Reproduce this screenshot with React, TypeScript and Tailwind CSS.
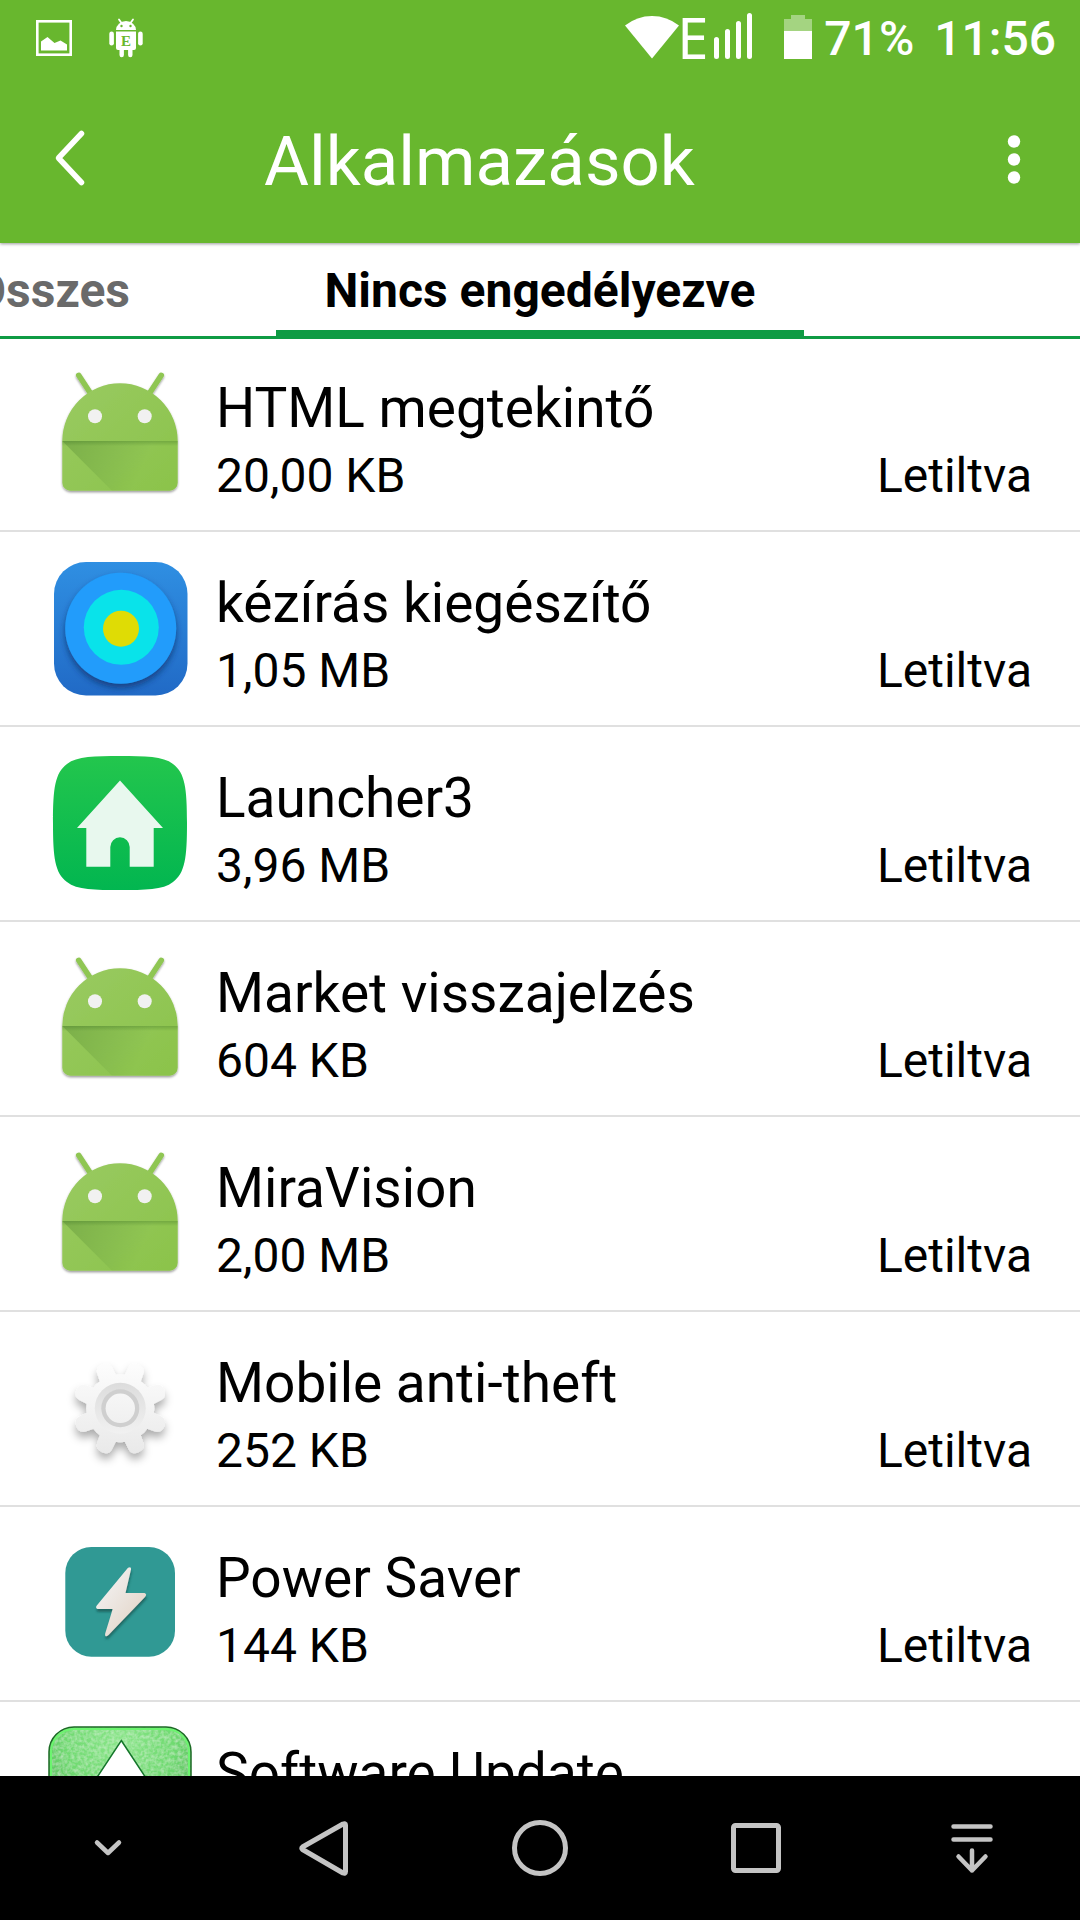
import React from "react";

const AndroidIcon = () => (
  <svg viewBox="0 0 144 144" className="size-36 shrink-0" aria-hidden="true">
    <defs>
      <linearGradient id="droidBody" x1="0" y1="0" x2="1" y2="1">
        <stop offset="0" stopColor="#99ca61" />
        <stop offset="1" stopColor="#8bc34a" />
      </linearGradient>
      <linearGradient id="droidFold" gradientUnits="userSpaceOnUse" x1="20" y1="80" x2="92" y2="112">
        <stop offset="0" stopColor="#33691e" stopOpacity="0.25" />
        <stop offset="1" stopColor="#33691e" stopOpacity="0" />
      </linearGradient>
      <linearGradient id="droidSeam" x1="0" y1="0" x2="0" y2="1">
        <stop offset="0" stopColor="#33691e" stopOpacity="0.3" />
        <stop offset="1" stopColor="#33691e" stopOpacity="0" />
      </linearGradient>
      <filter id="droidShadow" x="-10%" y="-10%" width="120%" height="120%">
        <feDropShadow dx="0" dy="1.5" stdDeviation="1.3" floodColor="#000" floodOpacity="0.4" />
      </filter>
    </defs>
    <g filter="url(#droidShadow)">
      <path d="M30.7 14.3 43 33M113.3 14.3 101 33" stroke="#8fc653" strokeWidth="5.5" strokeLinecap="round" />
      <path d="M14.3 80a57.7 57.7 0 0 1 115.4 0v41.700a8 8 0 0 1-8 8H22.300a8 8 0 0 1-8-8Z" fill="url(#droidBody)" />
    </g>
    <path d="M14.300 80 64 129.700h57.700a8 8 0 0 0 8-8V80Z" fill="url(#droidFold)" />
    <rect x="14.300" y="80" width="115.400" height="5" fill="url(#droidSeam)" />
    <circle cx="47" cy="55.300" r="7" fill="#f1f1f1" />
    <circle cx="96.700" cy="55.300" r="7" fill="#f1f1f1" />
  </svg>
);

const HandwritingIcon = () => (
  <svg viewBox="0 0 144 144" className="size-36 shrink-0" aria-hidden="true">
    <defs>
      <linearGradient id="blueTile" x1="0" y1="0" x2="0" y2="1">
        <stop offset="0" stopColor="#2f8fe2" />
        <stop offset="1" stopColor="#216ac6" />
      </linearGradient>
      <filter id="discShadow" x="-15%" y="-15%" width="130%" height="135%">
        <feDropShadow dx="0" dy="4" stdDeviation="3" floodColor="#0a2f66" floodOpacity="0.7" />
      </filter>
    </defs>
    <rect x="6" y="6" width="133.500" height="133.500" rx="32" fill="url(#blueTile)" />
    <circle cx="72.700" cy="72.300" r="55.500" fill="#209cfb" filter="url(#discShadow)" />
    <circle cx="73.300" cy="71.300" r="37.500" fill="#09e3ea" />
    <circle cx="73" cy="72.700" r="18" fill="#dfdc05" />
  </svg>
);

const LauncherIcon = () => (
  <svg viewBox="0 0 144 144" className="size-36 shrink-0" aria-hidden="true">
    <defs>
      <linearGradient id="greenTile" x1="0" y1="0" x2="0" y2="1">
        <stop offset="0" stopColor="#23c64d" />
        <stop offset="1" stopColor="#02b650" />
      </linearGradient>
    </defs>
    <path
      d="M72 5c25 0 43 0 53 8 12 9 14 24 14 59s-2 50-14 59c-10 8-28 8-53 8s-43 0-53-8C7 122 5 107 5 72s2-50 14-59C29 5 47 5 72 5Z"
      fill="url(#greenTile)"
    />
    <path
      d="M72 29.500 115 77h-9.300v38.700h-24V96a9.700 9.700 0 0 0-19.400 0v19.700h-24V77H29Z"
      fill="#e8f8ee"
    />
  </svg>
);

const teeth = [22.5, 67.5, 112.5, 157.5, 202.5, 247.5, 292.5, 337.5];

const GearIcon = () => (
  <svg viewBox="0 0 144 144" className="size-36 shrink-0" aria-hidden="true">
    <defs>
      <linearGradient id="gearFill" gradientUnits="userSpaceOnUse" x1="72" y1="26" x2="72" y2="118">
        <stop offset="0" stopColor="#fdfdfd" />
        <stop offset="1" stopColor="#e9e9e9" />
      </linearGradient>
      <linearGradient id="gearRing" x1="0" y1="0" x2="0" y2="1">
        <stop offset="0" stopColor="#dcdcdc" />
        <stop offset="1" stopColor="#f1f1f1" />
      </linearGradient>
      <filter id="gearShadow" x="-20%" y="-20%" width="140%" height="150%">
        <feDropShadow dx="0" dy="6" stdDeviation="4" floodColor="#000" floodOpacity="0.32" />
      </filter>
    </defs>
    <g filter="url(#gearShadow)">
      <g fill="url(#gearFill)">
        <circle cx="72.300" cy="72.300" r="34" />
        {teeth.map((angle) => {
          const a = (angle * Math.PI) / 180;
          const point = (r: number, side: number) =>
            `${72.3 + r * Math.cos(a) - side * Math.sin(a)} ${72.3 + r * Math.sin(a) + side * Math.cos(a)}`;
          return (
            <path
              key={angle}
              d={`M${point(28, -9)}L${point(41, -8)}Q${point(47.5, -7.5)} ${point(47.5, 0)}Q${point(47.5, 7.5)} ${point(41, 8)}L${point(28, 9)}Z`}
            />
          );
        })}
      </g>
    </g>
    <circle cx="72.300" cy="72.300" r="25.500" fill="url(#gearRing)" />
    <circle cx="72.300" cy="72.300" r="19" fill="#cfcfcf" />
    <circle cx="72.300" cy="72.300" r="14.700" fill="url(#gearFill)" />
  </svg>
);

const PowerIcon = () => (
  <svg viewBox="0 0 144 144" className="size-36 shrink-0" aria-hidden="true">
    <defs>
      <linearGradient id="boltFill" x1="0" y1="0" x2="1" y2="1">
        <stop offset="0.200" stopColor="#f1efee" />
        <stop offset="0.900" stopColor="#e2d3c5" />
      </linearGradient>
      <filter id="boltShadow" x="-20%" y="-20%" width="140%" height="140%">
        <feDropShadow dx="0.500" dy="3" stdDeviation="0.900" floodColor="#0d4744" floodOpacity="0.600" />
      </filter>
    </defs>
    <rect x="17.300" y="16" width="109.700" height="109.700" rx="26" fill="#309994" />
    <path
      d="M80 36.800Q83.500 35 83 38.500L77.500 62H96.500Q99.500 63 97 66L60.500 104Q56.500 107 57.200 102.500L64.700 78H49.500Q47 77 48.800 74.500Z"
      fill="url(#boltFill)"
      filter="url(#boltShadow)"
    />
  </svg>
);

const UpdateIcon = () => (
  <svg viewBox="0 0 144 144" className="size-36 shrink-0" aria-hidden="true">
    <defs>
      <radialGradient id="leather" cx="0.5" cy="0.1" r="0.7">
        <stop offset="0" stopColor="#8be58a" />
        <stop offset="0.550" stopColor="#6fda70" />
        <stop offset="1" stopColor="#55b35a" />
      </radialGradient>
      <filter id="grain" x="0" y="0" width="100%" height="100%">
        <feTurbulence type="fractalNoise" baseFrequency="0.300" numOctaves="2" result="noise" />
        <feColorMatrix in="noise" type="matrix" values="0 0 0 0 1  0 0 0 0 1  0 0 0 0 1  0.6 0 0 0 -0.2" result="light" />
        <feComposite in="light" in2="SourceGraphic" operator="in" result="specks" />
        <feMerge>
          <feMergeNode in="SourceGraphic" />
          <feMergeNode in="specks" />
        </feMerge>
      </filter>
    </defs>
    <rect x="1" y="1" width="142" height="142" rx="25" fill="url(#leather)" filter="url(#grain)" />
    <rect x="3" y="3" width="138" height="138" rx="23" fill="none" stroke="#6cf56f" strokeWidth="2" />
    <rect x="1" y="1" width="142" height="142" rx="25" fill="none" stroke="#1b6a24" strokeWidth="1.500" />
    <path d="M73.300 14.500 119 84H96v36H50V84H27.500Z" fill="#fff" stroke="#14762a" strokeWidth="1.500" />
  </svg>
);

const apps = [
  { name: "HTML megtekintő", size: "20,00 KB", Icon: AndroidIcon },
  { name: "kézírás kiegészítő", size: "1,05 MB", Icon: HandwritingIcon },
  { name: "Launcher3", size: "3,96 MB", Icon: LauncherIcon },
  { name: "Market visszajelzés", size: "604 KB", Icon: AndroidIcon },
  { name: "MiraVision", size: "2,00 MB", Icon: AndroidIcon },
  { name: "Mobile anti-theft", size: "252 KB", Icon: GearIcon },
  { name: "Power Saver", size: "144 KB", Icon: PowerIcon },
  { name: "Software Update", size: "", Icon: UpdateIcon },
];

const StatusBar = () => (
  <div className="flex h-[72px] items-center pt-1 pr-6 pl-9">
    <svg viewBox="0 0 36 36" className="size-9" aria-hidden="true">
      <rect x="1.300" y="1.300" width="33.400" height="33.400" fill="none" stroke="#fff" strokeWidth="2.600" />
      <path d="M5 21.500 11.500 17l7 6 6-2.500 6.500 4v6H5Z" fill="#fff" />
    </svg>
    <svg viewBox="0 0 34 40" className="ml-[37px] h-10 w-[34px]" aria-hidden="true">
      <g fill="#fff">
        <path d="M7 12a10 9 0 0 1 20 0Z" />
        <path d="M7 13.500h20V30a2 2 0 0 1-2 2h-1.500v5a2.200 2.200 0 0 1-4.400 0v-5h-4.200v5a2.200 2.200 0 0 1-4.400 0v-5H9a2 2 0 0 1-2-2Z" />
        <rect x="0.300" y="13.500" width="4.600" height="14" rx="2.300" />
        <rect x="29.100" y="13.500" width="4.600" height="14" rx="2.300" />
      </g>
      <path d="m10 1.500 2.500 3.500M24 1.500 21.500 5" stroke="#fff" strokeWidth="1.800" strokeLinecap="round" />
      <circle cx="12.500" cy="8" r="1.200" fill="#68b72e" />
      <circle cx="21.500" cy="8" r="1.200" fill="#68b72e" />
      <text x="17" y="27.500" textAnchor="middle" fontSize="15" fontFamily="Liberation Serif, serif" fontWeight="bold" fill="#68b72e">
        E
      </text>
    </svg>
    <div className="ml-auto flex items-center">
      <svg viewBox="0 0 54 44" className="mb-0.5 h-11 w-[54px]" aria-hidden="true">
        <path d="M0 10.500Q12 1 27 1t27 9.500L27 43.500Z" fill="#fff" />
      </svg>
      <span className="-ml-0.5 pb-0.5 font-['Noto_Sans',sans-serif] text-[56px] leading-[72px]">E</span>
      <svg viewBox="0 0 38 46" className="mb-1 ml-1.5 h-[46px] w-[38px]" aria-hidden="true">
        <path d="M2.500 26.500v17M13.500 18.500v25M24.500 10.500v33M35.500 2.500v41" stroke="#fff" strokeWidth="5" strokeLinecap="round" />
      </svg>
      <svg viewBox="0 0 28 44" className="mb-0.5 ml-8 h-11 w-7" aria-hidden="true">
        <path d="M7 0h14v4h7v12H0V4h7Z" fill="#fff" fillOpacity="0.400" />
        <path d="M0 16h28v28H0Z" fill="#fff" />
      </svg>
      <span className="ml-3 pt-0.5 text-5xl font-medium">71%</span>
      <span className="ml-5 pt-0.5 text-5xl font-medium">11:56</span>
    </div>
  </div>
);

export default function App() {
  return (
    <div className="flex h-screen flex-col overflow-hidden bg-white font-[Roboto,sans-serif] text-black">
      <header className="z-10 shrink-0 bg-[#68b72e] text-white shadow-[0_1px_3px_rgba(0,0,0,0.4)]">
        <StatusBar />
        <div className="flex h-[171px] items-center pr-10 pl-9">
          <button type="button" aria-label="Vissza" className="size-[72px]">
            <svg viewBox="0 0 72 72" fill="none" className="size-full">
              <path d="M45.500 11.500 22.500 36l23 24.500" stroke="#fff" strokeWidth="5.500" strokeLinecap="round" strokeLinejoin="round" />
            </svg>
          </button>
          <h1 className="ml-[156px] flex-1 pt-2 text-[69px] leading-20">Alkalmazások</h1>
          <button type="button" aria-label="További lehetőségek" className="h-[72px] w-[52px]">
            <svg viewBox="0 0 52 72" className="size-full" fill="#fff">
              <circle cx="26" cy="19.500" r="6.200" />
              <circle cx="26" cy="37.500" r="6.200" />
              <circle cx="26" cy="55.500" r="6.200" />
            </svg>
          </button>
        </div>
      </header>

      <div
        role="tablist"
        className="grid h-24 shrink-0 grid-cols-[minmax(0,1fr)_528px_minmax(0,1fr)] text-5xl leading-14 font-bold"
      >
        <button
          type="button"
          role="tab"
          aria-selected="false"
          className="flex items-start justify-end overflow-hidden border-b-3 border-[#0f9b44] pt-5 pr-[146px] text-[#6a6a6a]"
        >
          Összes
        </button>
        <button
          type="button"
          role="tab"
          aria-selected="true"
          className="flex items-start justify-center border-b-9 border-[#0f9b44] pt-5"
        >
          Nincs engedélyezve
        </button>
        <div className="border-b-3 border-[#0f9b44]" />
      </div>

      <ul className="-mt-0.5 min-h-0 flex-1 overflow-hidden">
        {apps.map(({ name, size, Icon }) => (
          <li key={name} className="flex h-[195px] items-start gap-6 border-b-2 border-[#e0e0e0] px-12">
            <div className="shrink-0 pt-6">
              <Icon />
            </div>
            <div className="flex flex-1 flex-col gap-2 pt-[39px]">
              <div className="text-[55px] leading-16">{name}</div>
              {size && (
                <div className="flex justify-between text-5xl leading-14">
                  <span>{size}</span>
                  <span>Letiltva</span>
                </div>
              )}
            </div>
          </li>
        ))}
      </ul>

      <nav className="grid h-36 shrink-0 grid-cols-5 place-items-center bg-black text-[#c4c4c4]">
        <button type="button" aria-label="Sáv elrejtése">
          <svg viewBox="0 0 72 72" className="size-[72px]" fill="none" stroke="currentColor" strokeWidth="4.500" strokeLinecap="round" strokeLinejoin="round">
            <path d="M25 30.500 36 41l11-10.500" />
          </svg>
        </button>
        <button type="button" aria-label="Vissza">
          <svg viewBox="0 0 72 72" className="size-[72px]" fill="none" stroke="currentColor" strokeWidth="5" strokeLinejoin="round">
            <path d="M14.500 35Q13 36 14.500 37.500L55 61Q57.500 62 57.500 59.500V13Q57.500 11 55 12Z" />
          </svg>
        </button>
        <button type="button" aria-label="Kezdőképernyő">
          <svg viewBox="0 0 72 72" className="size-[72px]" fill="none" stroke="currentColor" strokeWidth="5">
            <circle cx="36" cy="36" r="25.500" />
          </svg>
        </button>
        <button type="button" aria-label="Áttekintés">
          <svg viewBox="0 0 72 72" className="size-[72px]" fill="none" stroke="currentColor" strokeWidth="5">
            <rect x="13.500" y="13.500" width="45" height="45" rx="2" />
          </svg>
        </button>
        <button type="button" aria-label="Értesítések">
          <svg viewBox="0 0 72 72" className="size-[72px]" fill="none" stroke="currentColor" strokeWidth="4.500" strokeLinecap="round" strokeLinejoin="round">
            <path d="M17.500 14.500h37M17.500 27.500h37M36 38.500v20M22.500 44.500 36 58.500l13.500-14" />
          </svg>
        </button>
      </nav>
    </div>
  );
}
